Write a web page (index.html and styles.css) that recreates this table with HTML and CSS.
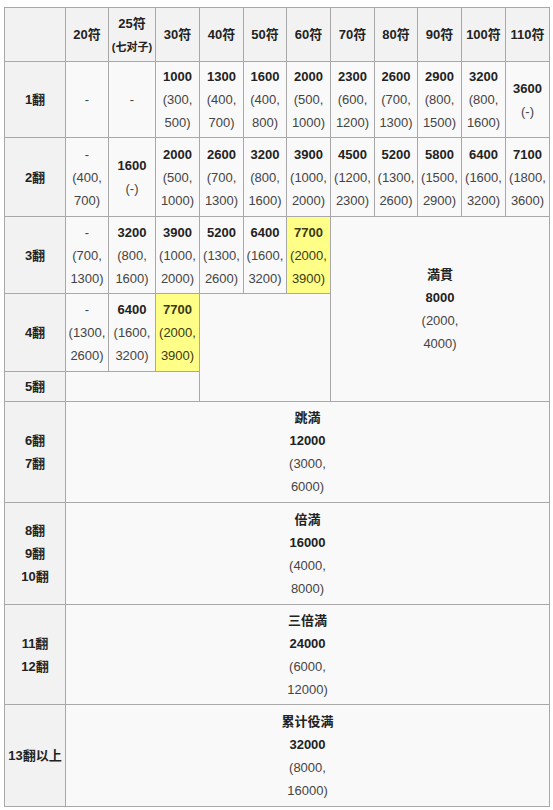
FILE: index.html
```html
<!DOCTYPE html>
<html lang="zh">
<head>
<meta charset="utf-8">
<title>点数表</title>
<link rel="stylesheet" href="styles.css">
</head>
<body>
<table class="score">
  <colgroup>
    <col class="c-head">
    <col class="c43"><col class="c47"><col class="c44"><col class="c44"><col class="c43">
    <col class="c44"><col class="c44"><col class="c43"><col class="c44"><col class="c44"><col class="c44">
  </colgroup>
  <tr class="r-head">
    <th></th>
    <th>20符</th>
    <th>25符<br><span class="sub">(七对子)</span></th>
    <th>30符</th>
    <th>40符</th>
    <th>50符</th>
    <th>60符</th>
    <th>70符</th>
    <th>80符</th>
    <th>90符</th>
    <th>100符</th>
    <th>110符</th>
  </tr>
  <tr class="r1">
    <th>1翻</th>
    <td class="n">-</td>
    <td class="n">-</td>
    <td><b>1000</b><br>(300,<br>500)</td>
    <td><b>1300</b><br>(400,<br>700)</td>
    <td><b>1600</b><br>(400,<br>800)</td>
    <td><b>2000</b><br>(500,<br>1000)</td>
    <td><b>2300</b><br>(600,<br>1200)</td>
    <td><b>2600</b><br>(700,<br>1300)</td>
    <td><b>2900</b><br>(800,<br>1500)</td>
    <td><b>3200</b><br>(800,<br>1600)</td>
    <td><b>3600</b><br>(-)</td>
  </tr>
  <tr class="r2">
    <th>2翻</th>
    <td>-<br>(400,<br>700)</td>
    <td><b>1600</b><br>(-)</td>
    <td><b>2000</b><br>(500,<br>1000)</td>
    <td><b>2600</b><br>(700,<br>1300)</td>
    <td><b>3200</b><br>(800,<br>1600)</td>
    <td><b>3900</b><br>(1000,<br>2000)</td>
    <td><b>4500</b><br>(1200,<br>2300)</td>
    <td><b>5200</b><br>(1300,<br>2600)</td>
    <td><b>5800</b><br>(1500,<br>2900)</td>
    <td><b>6400</b><br>(1600,<br>3200)</td>
    <td><b>7100</b><br>(1800,<br>3600)</td>
  </tr>
  <tr class="r3">
    <th>3翻</th>
    <td>-<br>(700,<br>1300)</td>
    <td><b>3200</b><br>(800,<br>1600)</td>
    <td><b>3900</b><br>(1000,<br>2000)</td>
    <td><b>5200</b><br>(1300,<br>2600)</td>
    <td><b>6400</b><br>(1600,<br>3200)</td>
    <td class="hl"><b>7700</b><br>(2000,<br>3900)</td>
    <td colspan="5" rowspan="3"><b>満貫</b><br><b>8000</b><br>(2000,<br>4000)</td>
  </tr>
  <tr class="r4">
    <th>4翻</th>
    <td>-<br>(1300,<br>2600)</td>
    <td><b>6400</b><br>(1600,<br>3200)</td>
    <td class="hl"><b>7700</b><br>(2000,<br>3900)</td>
    <td colspan="3" rowspan="2"></td>
  </tr>
  <tr class="r5">
    <th>5翻</th>
    <td colspan="3"></td>
  </tr>
  <tr class="r6">
    <th>6翻<br>7翻</th>
    <td colspan="11"><b>跳満</b><br><b>12000</b><br>(3000,<br>6000)</td>
  </tr>
  <tr class="r8">
    <th>8翻<br>9翻<br>10翻</th>
    <td colspan="11"><b>倍満</b><br><b>16000</b><br>(4000,<br>8000)</td>
  </tr>
  <tr class="r11">
    <th>11翻<br>12翻</th>
    <td colspan="11"><b>三倍満</b><br><b>24000</b><br>(6000,<br>12000)</td>
  </tr>
  <tr class="r13">
    <th>13翻以上</th>
    <td colspan="11"><b>累计役满</b><br><b>32000</b><br>(8000,<br>16000)</td>
  </tr>
</table>
</body>
</html>
```

FILE: styles.css
```css
html, body {
  margin: 0;
  padding: 0;
  background: #ffffff;
}

body {
  padding: 7px 0 0 4px;
  font-family: "Liberation Sans", Arial, "Noto Sans CJK SC", sans-serif;
  font-size: 13px;
  color: #444;
}

.score {
  border-collapse: collapse;
  table-layout: fixed;
  width: 546px;
  background: #f9f9f9;
}

.c-head { width: 61px; }
.c43 { width: 43px; }
.c44 { width: 44px; }
.c47 { width: 47px; }

.score th,
.score td {
  border: 1px solid #a8a8a8;
  padding: 0;
  text-align: center;
  vertical-align: middle;
  line-height: 23px;
  white-space: nowrap;
  overflow: hidden;
}

.score th {
  background: #f2f2f2;
  color: #222;
  font-weight: bold;
}

.score td {
  background: #f9f9f9;
}

.score td b {
  color: #222;
}

.score td.hl {
  background: #ffff88;
}

.score td.hl,
.score td.hl b {
  color: #3a3a10;
}

.sub {
  font-size: 11px;
  line-height: 16px;
}

.r-head { height: 54px; }
.r1 { height: 76px; }
.r2 { height: 79px; }
.r3 { height: 77px; }
.r4 { height: 78px; }
.r5 { height: 30px; }
.r6 { height: 101px; }
.r8 { height: 102px; }
.r11 { height: 100px; }
.r13 { height: 102px; }
```
